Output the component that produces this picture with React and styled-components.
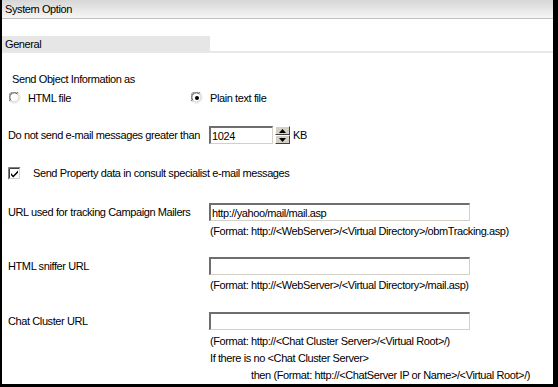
import React from "react";
import styled, { createGlobalStyle } from "styled-components";

const Global = createGlobalStyle`
  html, body {
    margin: 0;
    padding: 0;
    background: #000;
  }
  body {
    font-family: "Liberation Sans", Arial, sans-serif;
    font-size: 11px;
    letter-spacing: -0.4px;
    color: #000;
  }
`;

const Frame = styled.div`
  width: 551px;
  height: 384px;
  margin-left: 2px;
  background: #fff;
  display: flex;
  flex-direction: column;
  overflow: hidden;
`;

const TitleBar = styled.div`
  height: 18px;
  flex-shrink: 0;
  display: flex;
  align-items: center;
  padding-left: 3px;
  background: linear-gradient(#d6d6d6, #f6f6f6);
  border-bottom: 1px solid #c0c0c0;
`;

const TabLine = styled.div`
  margin-top: 17px;
  height: 15px;
  flex-shrink: 0;
  display: flex;
  border-bottom: 2px solid #e8e8e8;
`;

const Tab = styled.div`
  width: 205px;
  padding-left: 3px;
  display: flex;
  align-items: center;
  background: #e6e6e6;
`;

const Body = styled.div`
  padding-left: 6px;
  display: flex;
  flex-direction: column;
`;

const Line = styled.div`
  height: 16px;
  margin-top: ${(p) => p.$mt || 0}px;
  padding-left: ${(p) => p.$indent || 0}px;
  display: flex;
  align-items: center;
  white-space: nowrap;
`;

const RadioRow = styled.div`
  margin-top: 3px;
  height: 16px;
  display: grid;
  grid-template-columns: 183px auto;
  align-items: center;
`;

const Option = styled.label`
  display: flex;
  align-items: center;
  gap: 7px;
  padding-left: ${(p) => p.$pl || 0}px;
`;

const FieldRow = styled.div`
  margin-top: ${(p) => p.$mt}px;
  display: grid;
  grid-template-columns: 201px 261px;
  align-items: center;
`;

const Label = styled.span`
  white-space: nowrap;
  overflow: hidden;
  width: ${(p) => (p.$w ? `${p.$w}px` : "auto")};
  margin-left: ${(p) => p.$ml || 0}px;
  flex-shrink: 0;
`;

const TextBox = styled.div`
  height: 18px;
  box-sizing: border-box;
  width: ${(p) => p.$w || 261}px;
  border-top: 2px solid #6e6e6e;
  border-left: 2px solid #6e6e6e;
  border-right: 1px solid #d4d0c8;
  border-bottom: 1px solid #d4d0c8;
  background: #fff;
  padding-left: 1px;
  display: flex;
  align-items: center;
`;

const Hint = styled.div`
  padding-left: 202px;
  display: flex;
  flex-direction: column;
  margin-top: 2px;
`;

const HintLine = styled.div`
  height: ${(p) => p.$h || 16}px;
  display: flex;
  align-items: center;
  white-space: nowrap;
  padding-left: ${(p) => p.$indent || 0}px;
`;

const SpinRow = styled.div`
  margin-top: 20px;
  height: 18px;
  display: flex;
  align-items: center;
`;

const Spinner = styled.div`
  margin-left: 2px;
  width: 15px;
  height: 18px;
  display: flex;
  flex-direction: column;
`;

const SpinButton = styled.div`
  flex: 1;
  background: #d4d0c8;
  box-sizing: border-box;
  border-top: 1px solid #fff;
  border-left: 1px solid #fff;
  border-right: 1px solid #404040;
  border-bottom: 1px solid #404040;
  display: flex;
  align-items: center;
  justify-content: center;
`;

const CheckRow = styled.label`
  margin-top: 21px;
  height: 16px;
  display: flex;
  align-items: center;
  gap: 12px;
`;

const Radio = ({ checked }) => (
  <svg width="12" height="12" viewBox="0 0 12 12">
    <circle cx="6" cy="6" r="5.5" fill="#fff" />
    <path d="M1.2 9.5 A5.5 5.5 0 0 1 9.5 1.2" fill="none" stroke="#808080" strokeWidth="1" />
    <path d="M2.1 8.6 A4.5 4.5 0 0 1 8.6 2.1" fill="none" stroke="#404040" strokeWidth="1" />
    <path d="M9.5 1.2 A5.5 5.5 0 0 1 1.2 9.5" fill="none" stroke="#e8e8e8" strokeWidth="1" />
    <path d="M8.6 2.1 A4.5 4.5 0 0 1 2.1 8.6" fill="none" stroke="#d4d0c8" strokeWidth="1" />
    {checked && <circle cx="6" cy="6" r="2" fill="#000" />}
  </svg>
);

const Check = () => (
  <svg width="13" height="13" viewBox="0 0 13 13">
    <rect x="0" y="0" width="13" height="13" fill="#fff" />
    <path d="M0.5 12.5 V0.5 H12.5" fill="none" stroke="#808080" />
    <path d="M1.5 11.5 V1.5 H11.5" fill="none" stroke="#404040" />
    <path d="M0.5 12.5 H12.5 V0.5" fill="none" stroke="#fff" />
    <path d="M1.5 11.5 H11.5 V1.5" fill="none" stroke="#d4d0c8" />
    <path d="M3 6 L5.2 8.4 L10 3.6 V5.8 L5.2 10.6 L3 8.2 Z" fill="#000" />
  </svg>
);

const Arrow = ({ up }) => (
  <svg width="7" height="4" viewBox="0 0 7 4">
    <path d={up ? "M0 4 H7 L3.5 0 Z" : "M0 0 H7 L3.5 4 Z"} fill="#000" />
  </svg>
);

const App = () => (
  <>
    <Global />
    <Frame>
      <TitleBar>System Option</TitleBar>
      <TabLine>
        <Tab>General</Tab>
      </TabLine>
      <Body>
        <Line $mt={18} $indent={4}>Send Object Information as</Line>
        <RadioRow>
          <Option $pl={1}>
            <Radio />
            HTML file
          </Option>
          <Option>
            <Radio checked />
            Plain text file
          </Option>
        </RadioRow>
        <SpinRow>
          <Label $w={201}>Do not send e-mail messages greater than</Label>
          <TextBox $w={64}>1024</TextBox>
          <Spinner>
            <SpinButton><Arrow up /></SpinButton>
            <SpinButton><Arrow /></SpinButton>
          </Spinner>
          <Label $ml={3}>KB</Label>
        </SpinRow>
        <CheckRow>
          <Check />
          Send Property data in consult specialist e-mail messages
        </CheckRow>

        <FieldRow $mt={22}>
          <Label>URL used for tracking Campaign Mailers</Label>
          <TextBox>http://yahoo/mail/mail.asp</TextBox>
        </FieldRow>
        <Hint>
          <HintLine>(Format: http://&lt;WebServer&gt;/&lt;Virtual Directory&gt;/obmTracking.asp)</HintLine>
        </Hint>

        <FieldRow $mt={18}>
          <Label>HTML sniffer URL</Label>
          <TextBox />
        </FieldRow>
        <Hint>
          <HintLine>(Format: http://&lt;WebServer&gt;/&lt;Virtual Directory&gt;/mail.asp)</HintLine>
        </Hint>

        <FieldRow $mt={19}>
          <Label>Chat Cluster URL</Label>
          <TextBox />
        </FieldRow>
        <Hint>
          <HintLine $h={17}>(Format: http://&lt;Chat Cluster Server&gt;/&lt;Virtual Root&gt;/)</HintLine>
          <HintLine $h={17}>If there is no &lt;Chat Cluster Server&gt;</HintLine>
          <HintLine $h={17} $indent={41}>then (Format: http://&lt;ChatServer IP or Name&gt;/&lt;Virtual Root&gt;/)</HintLine>
        </Hint>
      </Body>
    </Frame>
  </>
);

export default App;
